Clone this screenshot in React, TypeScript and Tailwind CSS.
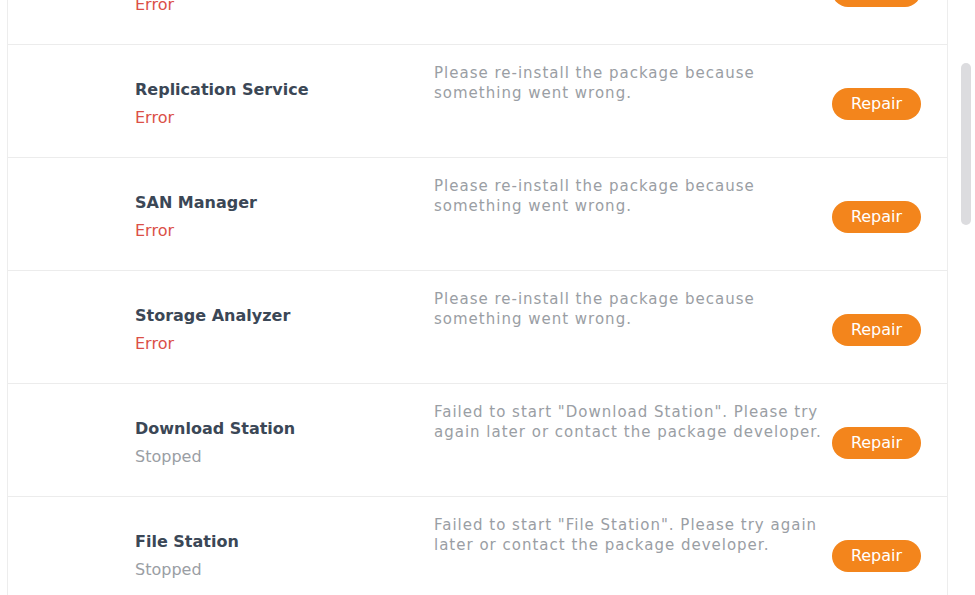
import React from 'react';

type Pkg = {
  name: string;
  status: 'Error' | 'Stopped';
  lines: string[];
};

const packages: Pkg[] = [
  { name: 'Hyper Backup', status: 'Error', lines: ['Please re-install the package because', 'something went wrong.'] },
  { name: 'Replication Service', status: 'Error', lines: ['Please re-install the package because', 'something went wrong.'] },
  { name: 'SAN Manager', status: 'Error', lines: ['Please re-install the package because', 'something went wrong.'] },
  { name: 'Storage Analyzer', status: 'Error', lines: ['Please re-install the package because', 'something went wrong.'] },
  {
    name: 'Download Station',
    status: 'Stopped',
    lines: ['Failed to start "Download Station". Please try', 'again later or contact the package developer.'],
  },
  {
    name: 'File Station',
    status: 'Stopped',
    lines: ['Failed to start "File Station". Please try again', 'later or contact the package developer.'],
  },
];

export default function App() {
  return (
    <div
      className="flex h-[595px] w-full overflow-hidden bg-white"
      style={{ fontFamily: '"DejaVu Sans", Verdana, sans-serif' }}
    >
      <div className="ml-[7px] h-full w-[941px] shrink-0 border-x border-[#ededed]">
        <div className="-mt-[68px]">
          {packages.map((pkg) => (
            <div key={pkg.name} className="flex h-[113px] border-b border-[#ececec]">
              <div className="w-[426px] shrink-0 pl-[127px] pt-[35px]">
                <div className="text-[16px] font-bold leading-[20px] text-[#3b4756]">{pkg.name}</div>
                <div
                  className={`mt-[8px] text-[16px] leading-[20px] ${
                    pkg.status === 'Error' ? 'text-[#db4f47]' : 'text-[#9a9ea4]'
                  }`}
                >
                  {pkg.status}
                </div>
              </div>
              <div className="w-[398px] shrink-0 pt-[18px] text-[15px] leading-[20px] tracking-[1px] text-[#9a9ea4]">
                {pkg.lines.map((l) => (
                  <div key={l} className="whitespace-nowrap">
                    {l}
                  </div>
                ))}
              </div>
              <div className="pt-[43px]">
                <button className="h-[32px] w-[89px] rounded-full bg-[#f3851c] text-[16px] text-white">
                  Repair
                </button>
              </div>
            </div>
          ))}
        </div>
      </div>
      <div className="ml-[13px] mt-[63px] h-[162px] w-[10px] rounded-full bg-[#dcdcdf]" />
    </div>
  );
}
